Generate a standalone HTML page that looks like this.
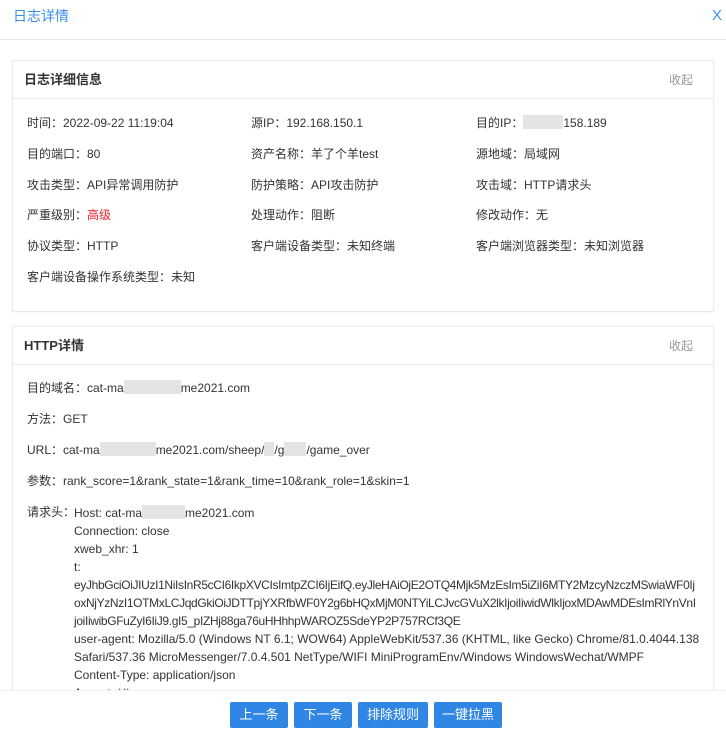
<!DOCTYPE html>
<html style="overflow:hidden;height:736px"><head><meta charset="utf-8"><style>
*{margin:0;padding:0;box-sizing:border-box}
body{width:726px;height:736px;overflow:hidden;background:#fff;font-family:"Liberation Sans","Noto Sans CJK SC",sans-serif;font-size:12px;color:#333;position:relative}
.a{position:absolute;white-space:nowrap;line-height:16px}
.title{left:13px;top:8px;font-size:14px;color:#3a8ee6}
.x{right:4px;top:8px;font-size:15px;color:#3a8ee6}
.hl{position:absolute;left:0;right:0;top:39px;height:1px;background:#e6ebef}
.panel{position:absolute;left:12px;width:702px;border:1px solid #e8ecef;box-shadow:0 0 3px rgba(0,0,0,.05);background:#fff}
.ph{position:absolute;left:0;right:0;top:0;height:38px;border-bottom:1px solid #e6ebef}
.pt{left:11px;top:11px;font-weight:bold;font-size:13px;color:#333}
.pc{right:20px;top:11px;color:#999}
.blur{display:inline-block;background:#e4e4e4;height:14px;vertical-align:-2px}
.btn{position:absolute;top:702px;height:26px;background:#2f86e4;color:#fff;font-size:13px;line-height:26px;text-align:center;border-radius:2px;z-index:3}
.foot{position:absolute;left:0;right:0;top:690px;height:46px;background:#fff;border-top:1px solid #eef1f3;z-index:2}
.tk{letter-spacing:-0.35px}
</style></head><body>
<div class="a title">日志详情</div>
<div class="a x">X</div>
<div class="hl"></div>

<div class="panel" style="top:60px;height:252px">
<div class="ph"></div>
<div class="a pt">日志详细信息</div>
<div class="a pc">收起</div>
</div>
<div class="a" style="left:27px;top:115px">时间：2022-09-22 11:19:04</div>
<div class="a" style="left:251px;top:115px">源IP：192.168.150.1</div>
<div class="a" style="left:476px;top:115px">目的IP：<span class="blur" style="width:40px"></span>158.189</div>
<div class="a" style="left:27px;top:146px">目的端口：80</div>
<div class="a" style="left:251px;top:146px">资产名称：羊了个羊test</div>
<div class="a" style="left:476px;top:146px">源地域：局域网</div>
<div class="a" style="left:27px;top:177px">攻击类型：API异常调用防护</div>
<div class="a" style="left:251px;top:177px">防护策略：API攻击防护</div>
<div class="a" style="left:476px;top:177px">攻击域：HTTP请求头</div>
<div class="a" style="left:27px;top:207px">严重级别：<span style="color:#e8212e">高级</span></div>
<div class="a" style="left:251px;top:207px">处理动作：阻断</div>
<div class="a" style="left:476px;top:207px">修改动作：无</div>
<div class="a" style="left:27px;top:238px">协议类型：HTTP</div>
<div class="a" style="left:251px;top:238px">客户端设备类型：未知终端</div>
<div class="a" style="left:476px;top:238px">客户端浏览器类型：未知浏览器</div>
<div class="a" style="left:27px;top:269px">客户端设备操作系统类型：未知</div>

<div class="panel" style="top:326px;height:410px">
<div class="ph"></div>
<div class="a pt">HTTP详情</div>
<div class="a pc">收起</div>
</div>
<div class="a" style="left:27px;top:380px">目的域名：cat-ma<span class="blur" style="width:57px"></span>me2021.com</div>
<div class="a" style="left:27px;top:411px">方法：GET</div>
<div class="a" style="left:27px;top:442px">URL：cat-ma<span class="blur" style="width:56px"></span>me2021.com/sheep/<span class="blur" style="width:10px"></span>/g<span class="blur" style="width:22px"></span>/game_over</div>
<div class="a" style="left:27px;top:473px">参数：rank_score=1&amp;rank_state=1&amp;rank_time=10&amp;rank_role=1&amp;skin=1</div>
<div class="a" style="left:27px;top:504px">请求头：</div>
<div class="a" style="left:74px;top:504px;line-height:18px">Host: cat-ma<span class="blur" style="width:43px"></span>me2021.com<br>Connection: close<br>xweb_xhr: 1<br>t:<br><span class="tk">eyJhbGciOiJIUzI1NiIsInR5cCI6IkpXVCIsImtpZCI6IjEifQ.eyJleHAiOjE2OTQ4Mjk5MzEsIm5iZiI6MTY2MzcyNzczMSwiaWF0Ij</span><br><span class="tk">oxNjYzNzI1OTMxLCJqdGkiOiJDTTpjYXRfbWF0Y2g6bHQxMjM0NTYiLCJvcGVuX2lkIjoiIiwidWlkIjoxMDAwMDEsImRlYnVnI</span><br><span class="tk">joiIiwibGFuZyI6IiJ9.gI5_pIZHj88ga76uHHhhpWAROZ5SdeYP2P757RCf3QE</span><br>user-agent: Mozilla/5.0 (Windows NT 6.1; WOW64) AppleWebKit/537.36 (KHTML, like Gecko) Chrome/81.0.4044.138<br>Safari/537.36 MicroMessenger/7.0.4.501 NetType/WIFI MiniProgramEnv/Windows WindowsWechat/WMPF<br>Content-Type: application/json<br>Accept: */*</div>

<div class="foot"></div>
<div class="btn" style="left:230px;width:58px">上一条</div>
<div class="btn" style="left:294px;width:58px">下一条</div>
<div class="btn" style="left:358px;width:70px">排除规则</div>
<div class="btn" style="left:434px;width:68px">一键拉黑</div>
</body></html>
